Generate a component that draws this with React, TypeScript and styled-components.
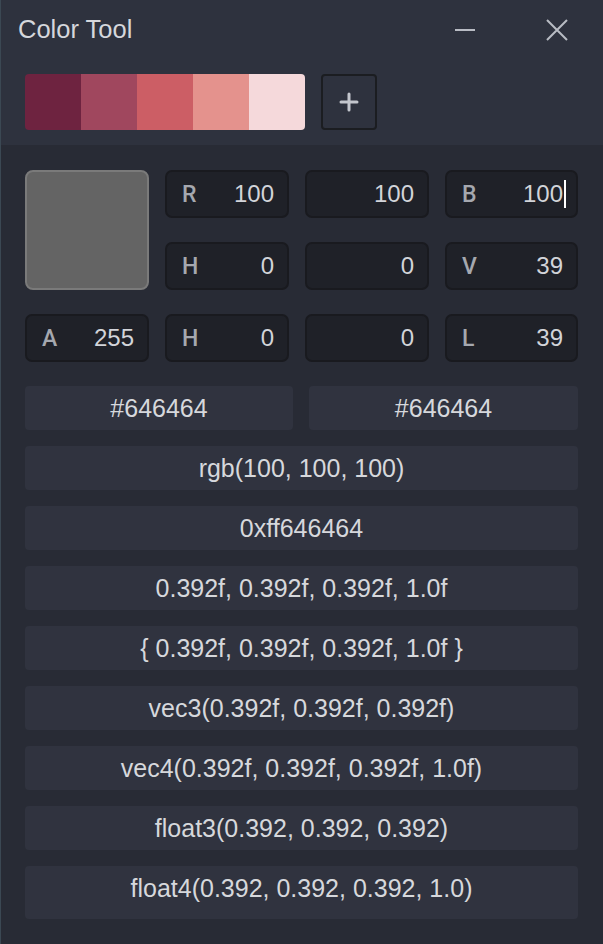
import React from "react";
import styled, { createGlobalStyle } from "styled-components";

const GlobalStyle = createGlobalStyle`
  html, body {
    margin: 0;
    padding: 0;
    background: #282b35;
  }
  body {
    font-family: "Liberation Sans", Arial, sans-serif;
  }
`;

// Window frame
const Window = styled.div`
  width: 603px;
  height: 944px;
  box-sizing: border-box;
  border-left: 1px solid #3b4853;
  background: #282b35;
  display: flex;
  flex-direction: column;
  overflow: hidden;
`;

const Header = styled.div`
  background: #2e323e;
  height: 145px;
  box-sizing: border-box;
  padding: 0 24px 15px 24px;
  display: flex;
  flex-direction: column;
`;

const TitleBar = styled.div`
  height: 60px;
  display: flex;
  align-items: center;
  margin-left: -7px;
`;

const Title = styled.div`
  flex: 1;
  font-size: 25.5px;
  color: #d5d7dc;
  padding-bottom: 2px;
`;

const WinButton = styled.button<{ $gap?: number }>`
  width: 40px;
  height: 40px;
  border: none;
  background: transparent;
  padding: 0;
  display: flex;
  align-items: center;
  justify-content: center;
  margin-left: ${(p) => p.$gap ?? 0}px;
  color: #b9bcc4;
`;

const PaletteRow = styled.div`
  margin-top: 14px;
  display: flex;
  gap: 16px;
`;

const Palette = styled.div`
  display: flex;
  border-radius: 4px;
  overflow: hidden;
  height: 56px;
`;

const Swatch = styled.div<{ $color: string }>`
  width: 56px;
  height: 56px;
  background: ${(p) => p.$color};
`;

const AddButton = styled.button`
  width: 56px;
  height: 56px;
  box-sizing: border-box;
  border: 2px solid #1b1d21;
  border-radius: 4px;
  background: #2e323e;
  display: flex;
  align-items: center;
  justify-content: center;
  padding: 0;
`;

const Body = styled.div`
  padding: 25px 25px 0 24px;
  display: flex;
  flex-direction: column;
  gap: 24px;
`;

const FieldGrid = styled.div`
  display: grid;
  grid-template-columns: 124px 124px 124px 133px;
  grid-auto-rows: 48px;
  column-gap: 16px;
  row-gap: 24px;
`;

const Preview = styled.div<{ $color: string }>`
  grid-row: span 2;
  box-sizing: border-box;
  background: ${(p) => p.$color};
  border: 2px solid #7a7a7a;
  border-radius: 8px;
`;

const Field = styled.div`
  box-sizing: border-box;
  background: #1f2128;
  border: 2px solid #191a1f;
  border-radius: 7px;
  display: flex;
  align-items: center;
  justify-content: space-between;
  padding: 0 13px 0 15px;
`;

const FieldLabel = styled.span`
  font-family: Roboto, "Liberation Sans", Arial, sans-serif;
  font-weight: 500;
  font-size: 23px;
  color: #a5a8af;
`;

const FieldValue = styled.span`
  margin-left: auto;
  font-size: 24px;
  color: #d2d4d9;
  display: flex;
  align-items: center;
`;

const Caret = styled.span`
  display: inline-block;
  width: 2px;
  height: 28px;
  background: #ffffff;
  margin-left: 1px;
  margin-right: -3px;
`;

const Formats = styled.div`
  display: flex;
  flex-direction: column;
  gap: 16px;
`;

const Pair = styled.div`
  display: grid;
  grid-template-columns: 268px 269px;
  column-gap: 16px;
`;

const FormatButton = styled.button<{ $tall?: boolean }>`
  height: ${(p) => (p.$tall ? 53 : 44)}px;
  box-sizing: border-box;
  padding: 0 0 ${(p) => (p.$tall ? 9 : 0)}px 0;
  border: none;
  border-radius: 4px;
  background: #30333f;
  color: #d6d8dc;
  font-family: "Liberation Sans", Arial, sans-serif;
  font-size: 25px;
  display: flex;
  align-items: center;
  justify-content: center;
`;

const palette = ["#6e2340", "#a0475e", "#cc5e65", "#e4928d", "#f5d9db"];

const fields: { label?: string; value: string; caret?: boolean }[] = [
  { label: "R", value: "100" },
  { value: "100" },
  { label: "B", value: "100", caret: true },
  { label: "H", value: "0" },
  { value: "0" },
  { label: "V", value: "39" },
  { label: "A", value: "255" },
  { label: "H", value: "0" },
  { value: "0" },
  { label: "L", value: "39" },
];

const formats = [
  "rgb(100, 100, 100)",
  "0xff646464",
  "0.392f, 0.392f, 0.392f, 1.0f",
  "{ 0.392f, 0.392f, 0.392f, 1.0f }",
  "vec3(0.392f, 0.392f, 0.392f)",
  "vec4(0.392f, 0.392f, 0.392f, 1.0f)",
  "float3(0.392, 0.392, 0.392)",
  "float4(0.392, 0.392, 0.392, 1.0)",
];

const App: React.FC = () => {
  return (
    <>
      <GlobalStyle />
      <Window>
        <Header>
          <TitleBar>
            <Title>Color Tool</Title>
            <WinButton>
              <svg width="22" height="22" viewBox="0 0 22 22">
                <line x1="1" y1="11" x2="21" y2="11" stroke="currentColor" strokeWidth="2" />
              </svg>
            </WinButton>
            <WinButton $gap={52}>
              <svg width="22" height="22" viewBox="0 0 22 22">
                <path d="M1 1 L21 21 M21 1 L1 21" stroke="currentColor" strokeWidth="2" fill="none" />
              </svg>
            </WinButton>
            <div style={{ width: 2 }} />
          </TitleBar>
          <PaletteRow>
            <Palette>
              {palette.map((c) => (
                <Swatch key={c} $color={c} />
              ))}
            </Palette>
            <AddButton>
              <svg width="20" height="20" viewBox="0 0 20 20">
                <path d="M10 2 V18 M2 10 H18" stroke="#c3c6cd" strokeWidth="3" strokeLinecap="round" />
              </svg>
            </AddButton>
          </PaletteRow>
        </Header>
        <Body>
          <FieldGrid>
            {fields.slice(0, 3).map((f, i) => (
              <React.Fragment key={i}>
                {i === 0 && <Preview $color="#646464" />}
                <Field>
                  {f.label && <FieldLabel>{f.label}</FieldLabel>}
                  <FieldValue>
                    {f.value}
                    {f.caret && <Caret />}
                  </FieldValue>
                </Field>
              </React.Fragment>
            ))}
            {fields.slice(3).map((f, i) => (
              <Field key={i}>
                {f.label && <FieldLabel>{f.label}</FieldLabel>}
                <FieldValue>{f.value}</FieldValue>
              </Field>
            ))}
          </FieldGrid>
          <Formats>
            <Pair>
              <FormatButton>#646464</FormatButton>
              <FormatButton>#646464</FormatButton>
            </Pair>
            {formats.map((f, i) => (
              <FormatButton key={f} $tall={i === formats.length - 1}>
                {f}
              </FormatButton>
            ))}
          </Formats>
        </Body>
      </Window>
    </>
  );
};

export default App;
